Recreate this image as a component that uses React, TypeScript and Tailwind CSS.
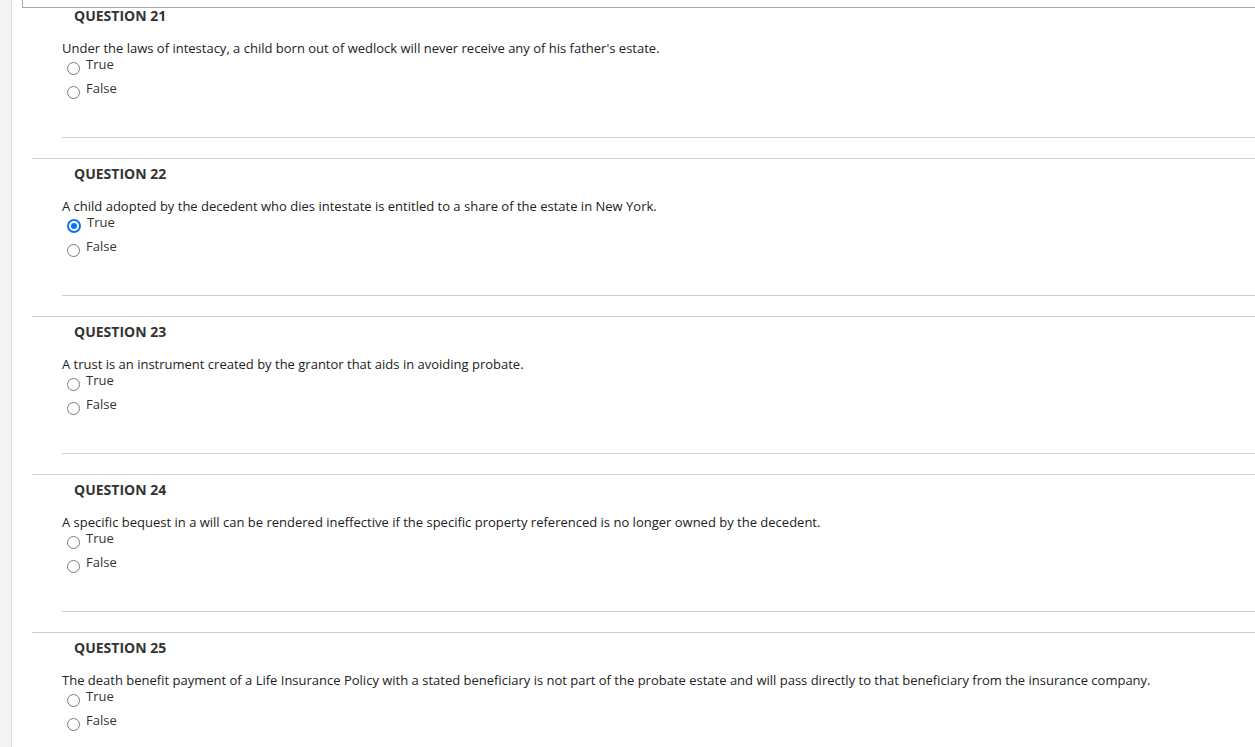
import React from "react";

type Q = { n: number; text: string; checked?: "True" | "False" };

const questions: Q[] = [
  { n: 21, text: "Under the laws of intestacy, a child born out of wedlock will never receive any of his father's estate." },
  { n: 22, text: "A child adopted by the decedent who dies intestate is entitled to a share of the estate in New York.", checked: "True" },
  { n: 23, text: "A trust is an instrument created by the grantor that aids in avoiding probate." },
  { n: 24, text: "A specific bequest in a will can be rendered ineffective if the specific property referenced is no longer owned by the decedent." },
  { n: 25, text: "The death benefit payment of a Life Insurance Policy with a stated beneficiary is not part of the probate estate and will pass directly to that beneficiary from the insurance company." },
];

function Radio({ checked }: { checked?: boolean }) {
  if (checked) {
    return (
      <span className="mt-[5px] flex h-[14px] w-[14px] shrink-0 items-center justify-center rounded-full border-[2px] border-[#0b74f4] bg-white">
        <span className="h-[6px] w-[6px] rounded-full bg-[#0b74f4]" />
      </span>
    );
  }
  return <span className="mt-[6px] h-[13px] w-[13px] shrink-0 rounded-full border border-[#7a7a7a] bg-white" />;
}

function Option({ label, checked }: { label: string; checked?: boolean }) {
  return (
    <div className="flex h-[16px] items-start gap-[6px]">
      <Radio checked={checked} />
      <span className="text-[13px] leading-[16px] text-[#333]">{label}</span>
    </div>
  );
}

export default function App() {
  return (
    <div className="flex h-[747px] w-full overflow-hidden bg-white text-[#333] font-['Open_Sans','Liberation_Sans',sans-serif]">
      <div className="w-[12px] shrink-0 border-r border-[#dcdcdc] bg-[#f4f4f4]" />
      <div className="min-w-0 flex-1">
        <div className="ml-[10px] h-[8px] border-b border-l border-[#a9a9a9]" />
        {questions.map((q, i) => (
          <section
            key={q.n}
            className={
              i === 0
                ? "ml-[20px] -mt-[8px] border-t border-transparent"
                : "ml-[20px] mt-[20px] border-t border-[#d0d0d0]"
            }
          >
            <h3 className="pl-[42px] pt-[5px] text-[14px] font-bold leading-[20px] text-[#333]">
              QUESTION {q.n}
            </h3>
            <p className="mt-[14px] pl-[30px] text-[13px] leading-[16px] text-[#222] whitespace-nowrap">{q.text}</p>
            <div className="flex flex-col gap-[8px] pl-[35px]">
              <Option label="True" checked={q.checked === "True"} />
              <Option label="False" checked={q.checked === "False"} />
            </div>
            <div className="ml-[30px] mt-[41px] border-t border-[#d0d0d0]" />
          </section>
        ))}
      </div>
    </div>
  );
}
